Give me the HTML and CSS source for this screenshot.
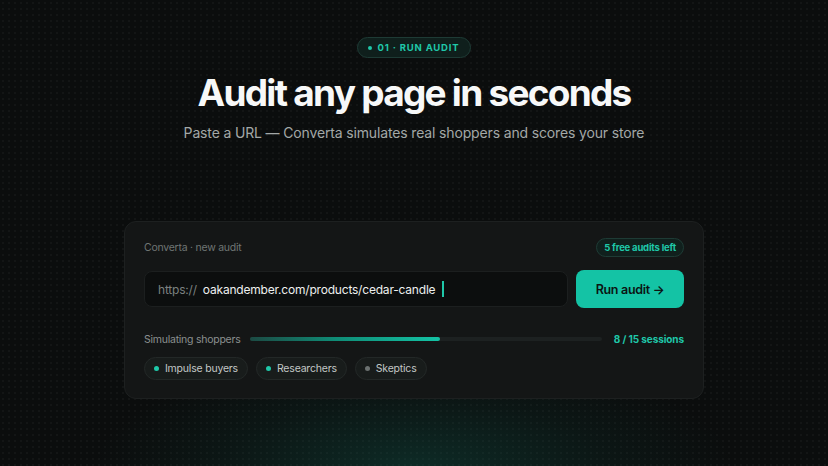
FILE: index.html
```html
<!DOCTYPE html>
<html lang="en">
<head>
  <meta charset="UTF-8">
  <meta name="viewport" content="width=device-width, initial-scale=1.0">
  <title>Converta · Run audit</title>
  <link rel="stylesheet" href="styles.css">
</head>
<body>
  <main class="hero">
    <div class="step"><span class="step-dot"></span>01 · RUN AUDIT</div>
    <h1 class="title">Audit any page in seconds</h1>
    <p class="lead">Paste a URL — Converta simulates real shoppers and scores your store</p>

    <section class="card">
      <div class="card-head">
        <span class="card-label">Converta · new audit</span>
        <span class="quota">5 free audits left</span>
      </div>

      <div class="url-row">
        <div class="url-field">
          <span class="url-scheme">https://</span>
          <span class="url-path">oakandember.com/products/cedar-candle</span>
          <span class="caret"></span>
        </div>
        <button class="run-btn">Run audit →</button>
      </div>

      <div class="progress-row">
        <span class="progress-label">Simulating shoppers</span>
        <div class="track"><div class="fill" style="width: 54%"></div></div>
        <span class="progress-count">8 / 15 sessions</span>
      </div>

      <div class="chips">
        <span class="chip"><span class="chip-dot"></span>Impulse buyers</span>
        <span class="chip"><span class="chip-dot"></span>Researchers</span>
        <span class="chip chip-idle"><span class="chip-dot"></span>Skeptics</span>
      </div>
    </section>
  </main>
</body>
</html>
```

FILE: styles.css
```css
* {
  margin: 0;
  padding: 0;
  box-sizing: border-box;
}

html, body {
  height: 100%;
}

body {
  background-color: #0b0d0d;
  background-image:
    radial-gradient(ellipse 320px 110px at 50% 100%, rgba(18, 105, 90, 0.32), rgba(18, 105, 90, 0.1) 60%, rgba(18, 105, 90, 0) 100%),
    radial-gradient(circle, rgba(255, 255, 255, 0.03) 1px, transparent 1px);
  background-size: 100% 100%, 6px 6px;
  font-family: Inter, "Noto Sans", sans-serif;
  color: #f2f4f3;
  overflow: hidden;
}

.hero {
  display: flex;
  flex-direction: column;
  align-items: center;
  padding-top: 37px;
}

.step {
  display: flex;
  align-items: center;
  gap: 6px;
  height: 21px;
  padding: 0 11px 0 10px;
  border: 1px solid #1e3b35;
  border-radius: 11px;
  background: #0f1f1c;
  color: #1fc8a9;
  font-size: 9.5px;
  font-weight: 700;
  letter-spacing: 0.8px;
}

.step-dot {
  width: 4px;
  height: 4px;
  border-radius: 50%;
  background: #1fc8a9;
}

.title {
  margin-top: 13px;
  font-size: 37px;
  font-weight: 700;
  letter-spacing: -1.75px;
  line-height: 44px;
  color: #f7f8f8;
}

.lead {
  margin-top: 8px;
  font-size: 14px;
  letter-spacing: -0.15px;
  line-height: 20px;
  color: #a3a8a7;
}

.card {
  width: 580px;
  margin-top: 78px;
  padding: 16px 19px 18px;
  background: #141616;
  border: 1px solid #1d2020;
  border-radius: 12px;
}

.card-head {
  display: flex;
  align-items: center;
  justify-content: space-between;
  height: 19px;
}

.card-label {
  font-size: 10.5px;
  letter-spacing: -0.25px;
  color: #6f7574;
}

.quota {
  height: 19px;
  line-height: 17px;
  padding: 0 7px;
  border: 1px solid #1e3b35;
  border-radius: 10px;
  background: #10201d;
  color: #1fc8a9;
  font-size: 9.5px;
  font-weight: 700;
  letter-spacing: -0.2px;
}

.url-row {
  display: flex;
  align-items: center;
  gap: 8px;
  margin-top: 13px;
}

.url-field {
  flex: 1;
  display: flex;
  align-items: center;
  height: 36px;
  padding: 0 13px;
  background: #0c0e0e;
  border: 1px solid #1c1f1f;
  border-radius: 8px;
  font-size: 12px;
  letter-spacing: -0.2px;
}

.url-scheme {
  color: #7b8180;
  margin-right: 6px;
}

.url-path {
  color: #eef0ef;
}

.caret {
  width: 2px;
  height: 16px;
  margin-left: 7px;
  background: #1fc8a9;
}

.run-btn {
  width: 108px;
  height: 38px;
  border: none;
  border-radius: 8px;
  background: #14c3a5;
  color: #0b1412;
  font-family: inherit;
  font-size: 12.5px;
  font-weight: 600;
  letter-spacing: -0.3px;
}

.progress-row {
  display: flex;
  align-items: center;
  gap: 10px;
  margin-top: 24px;
  height: 14px;
}

.progress-label {
  font-size: 10.5px;
  letter-spacing: -0.25px;
  color: #8b908f;
}

.track {
  flex: 1;
  height: 4px;
  border-radius: 2px;
  background: #1d2121;
}

.fill {
  height: 100%;
  border-radius: 2px;
  background: linear-gradient(90deg, #1c4a43, #0f8c76 45%, #14c3a5);
}

.progress-count {
  margin-left: 2px;
  font-size: 10px;
  font-weight: 700;
  letter-spacing: -0.1px;
  color: #1fc8a9;
}

.chips {
  display: flex;
  gap: 8px;
  margin-top: 11px;
}

.chip {
  display: flex;
  align-items: center;
  gap: 6px;
  height: 23px;
  padding: 0 9px 0 9px;
  border: 1px solid #232827;
  border-radius: 12px;
  background: #181c1b;
  color: #c2c7c6;
  font-size: 10.5px;
  letter-spacing: -0.2px;
}

.chip-dot {
  width: 5px;
  height: 5px;
  border-radius: 50%;
  background: #1fc8a9;
}

.chip-idle .chip-dot {
  background: #6b7170;
}
```
